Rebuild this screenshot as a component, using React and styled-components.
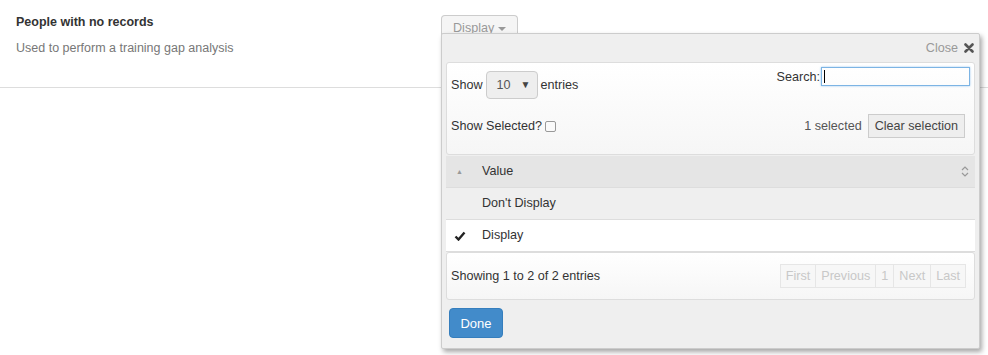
import React from 'react';
import styled, { createGlobalStyle } from 'styled-components';

const GlobalStyle = createGlobalStyle`
  body {
    margin: 0;
    background: #fff;
    font-family: "Liberation Sans", Arial, sans-serif;
    font-size: 12.6px;
    color: #333;
  }
`;

const Page = styled.div`
  position: relative;
  width: 988px;
  height: 355px;
  overflow: hidden;
`;

const FilterRow = styled.div`
  display: flex;
  height: 88px;
  border-bottom: 1px solid #ddd;
  box-sizing: border-box;
`;

const Info = styled.div`
  width: 425px;
  padding: 13px 0 0 16px;
`;

const Title = styled.div`
  font-size: 12.5px;
  font-weight: bold;
  line-height: 18px;
  color: #333;
`;

const Sub = styled.div`
  margin-top: 8px;
  font-size: 12.5px;
  line-height: 18px;
  color: #777;
`;

const Control = styled.div`
  padding-top: 15px;
`;

const Toggle = styled.div`
  display: inline-flex;
  align-items: center;
  gap: 4px;
  height: 22px;
  padding: 2px 11px 0;
  box-sizing: border-box;
  border: 1px solid #ccc;
  border-bottom: none;
  border-radius: 4px 4px 0 0;
  background: #f5f5f5;
  color: #999;
  font-size: 12.6px;
`;

const Caret = styled.span`
  width: 0;
  height: 0;
  border-left: 4px solid transparent;
  border-right: 4px solid transparent;
  border-top: 4px solid #999;
  margin-top: 2px;
`;

const Popup = styled.div`
  position: absolute;
  top: 33px;
  left: 441px;
  width: 539px;
  box-sizing: border-box;
  padding: 0 4px 10px;
  background: #efefef;
  border: 1px solid #ccc;
  border-radius: 2px;
  box-shadow: 2px 3px 5px rgba(0, 0, 0, 0.35);
  font-size: 12.6px;
`;

const CloseBar = styled.div`
  display: flex;
  justify-content: flex-end;
  align-items: center;
  gap: 6px;
  height: 28px;
  padding-right: 1px;
  color: #999;
`;

const Panel = styled.div`
  border: 1px solid #ddd;
  border-radius: 3px;
  background: linear-gradient(#fff, #f6f6f6);
  padding: ${p => p.$pad};
`;

const Line = styled.div`
  display: flex;
  justify-content: space-between;
  align-items: center;
  height: ${p => p.$h}px;
`;

const Group = styled.div`
  display: flex;
  align-items: center;
  gap: ${p => p.$gap || 5}px;
  align-self: ${p => p.$self || 'auto'};
  margin: ${p => p.$m || 0};
`;

const Select = styled.div`
  display: flex;
  align-items: center;
  justify-content: space-between;
  width: 52px;
  height: 28px;
  box-sizing: border-box;
  padding: 0 6px 0 10px;
  border: 1px solid #ccc;
  border-radius: 4px;
  background: #eee;
  color: #555;
  & span {
    font-size: 10px;
    color: #444;
  }
`;

const SearchInput = styled.div`
  width: 149px;
  height: 19px;
  box-sizing: border-box;
  border: 1px solid #7cb4e4;
  box-shadow: 0 0 2px #9cc8ee;
  padding: 2px 2px;
  & i {
    display: block;
    width: 1px;
    height: 13px;
    background: #000;
  }
`;

const Checkbox = styled.span`
  display: inline-block;
  width: 9px;
  height: 9px;
  border: 1px solid #999;
  border-radius: 2px;
  background: #fafafa;
`;

const Muted = styled.span`
  color: #555;
`;

const Btn = styled.div`
  height: 22px;
  padding: 0 6px;
  display: flex;
  align-items: center;
  border: 1px solid #ccc;
  background: #eee;
  color: #444;
`;

const Table = styled.div`
  margin-top: 1px;
`;

const Tr = styled.div`
  display: flex;
  align-items: center;
  height: 32px;
  box-sizing: border-box;
  background: ${p => p.$bg};
  border-bottom: 1px solid #ddd;
`;

const Mark = styled.div`
  width: 36px;
  padding-left: 10px;
  box-sizing: border-box;
  color: #999;
  font-size: 7px;
`;

const Check = styled.div`
  width: 36px;
  padding-left: 8px;
  box-sizing: border-box;
  display: flex;
`;

const Cell = styled.div`
  flex: 1;
  color: #333;
  margin-top: -1px;
`;

const SortIcon = styled.div`
  width: 20px;
  display: flex;
  justify-content: center;
`;

const Pager = styled.div`
  display: flex;
  margin: -1px 4px 0 0;
`;

const PageLink = styled.div`
  height: 22px;
  padding: 0 5px;
  display: flex;
  align-items: center;
  border: 1px solid #e6e6e6;
  margin-left: -1px;
  color: #c8c8c8;
  background: #f7f7f7;
`;

const Done = styled.div`
  display: inline-flex;
  align-items: center;
  justify-content: center;
  margin: 8px 0 0 3px;
  width: 54px;
  height: 30px;
  box-sizing: border-box;
  border: 1px solid #357ebd;
  border-radius: 4px;
  background: #428bca;
  color: #fff;
  font-size: 13px;
`;

const pages = ['First', 'Previous', '1', 'Next', 'Last'];

const App = () => {
  return (
    <Page>
      <GlobalStyle />
      <FilterRow>
        <Info>
          <Title>People with no records</Title>
          <Sub>Used to perform a training gap analysis</Sub>
        </Info>
        <Control>
          <Toggle>
            Display <Caret />
          </Toggle>
        </Control>
      </FilterRow>

      <Popup>
        <CloseBar>
          Close
          <svg width="10" height="10" viewBox="0 0 10 10">
            <path d="M1.5 1.5 L8.5 8.5 M8.5 1.5 L1.5 8.5" stroke="#555" strokeWidth="2.6" strokeLinecap="round" />
          </svg>
        </CloseBar>

        <Panel $pad="3px 4px 4px">
          <Line $h={40}>
            <Group $gap={3} $m="-3px 0 0">
              Show
              <Select>
                10 <span>▼</span>
              </Select>
              entries
            </Group>
            <Group $self="flex-start" $gap={1} $m="1px 0 0">
              Search:
              <SearchInput>
                <i />
              </SearchInput>
            </Group>
          </Line>
          <Line $h={44}>
            <Group $gap={3} $m="-4px 0 0">
              Show Selected?
              <Checkbox />
            </Group>
            <Group $gap={6} $m="-4px 5px 0 0">
              <Muted>1 selected</Muted>
              <Btn>Clear selection</Btn>
            </Group>
          </Line>
        </Panel>

        <Table>
          <Tr $bg="#e5e5e5">
            <Mark>▲</Mark>
            <Cell>Value</Cell>
            <SortIcon>
              <svg width="8" height="11" viewBox="0 0 8 11">
                <path d="M1 4 L4 1 L7 4 M1 7 L4 10 L7 7" fill="none" stroke="#999" strokeWidth="1.2" />
              </svg>
            </SortIcon>
          </Tr>
          <Tr $bg="#efefef">
            <Mark />
            <Cell>Don't Display</Cell>
          </Tr>
          <Tr $bg="#fff">
            <Check>
              <svg width="12" height="10" viewBox="0 0 12 10">
                <path d="M1.5 5.5 L4.5 8.5 L10.5 1.5" fill="none" stroke="#222" strokeWidth="2.4" />
              </svg>
            </Check>
            <Cell>Display</Cell>
          </Tr>
        </Table>

        <Panel $pad="0 4px">
          <Line $h={46}>
            Showing 1 to 2 of 2 entries
            <Pager>
              {pages.map(label => (
                <PageLink key={label}>{label}</PageLink>
              ))}
            </Pager>
          </Line>
        </Panel>

        <Done>Done</Done>
      </Popup>
    </Page>
  );
};

export default App;
